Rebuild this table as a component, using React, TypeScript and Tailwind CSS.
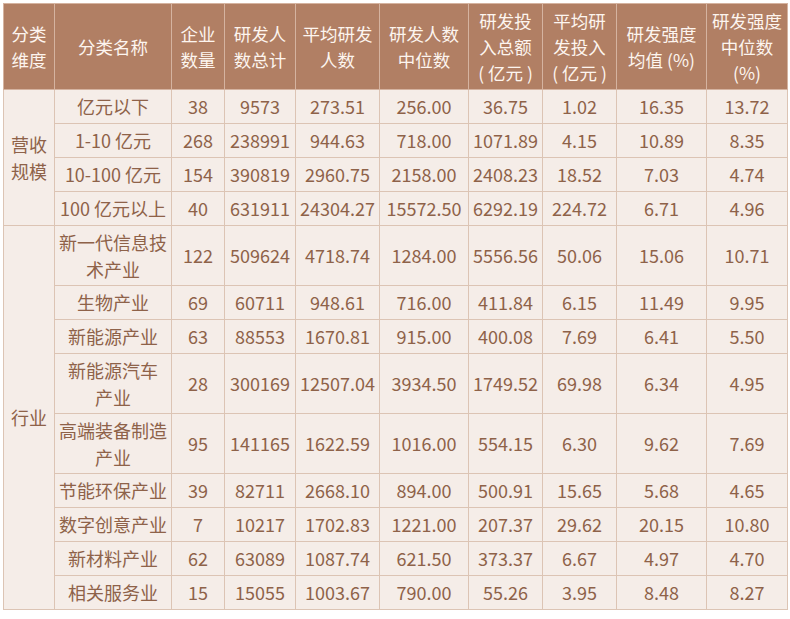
import React from "react";

type Row = {
  name: string[];
  cells: string[];
  tall?: boolean;
};

const scaleRows: Row[] = [
  { name: ["亿元以下"], cells: ["38", "9573", "273.51", "256.00", "36.75", "1.02", "16.35", "13.72"] },
  { name: ["1-10 亿元"], cells: ["268", "238991", "944.63", "718.00", "1071.89", "4.15", "10.89", "8.35"] },
  { name: ["10-100 亿元"], cells: ["154", "390819", "2960.75", "2158.00", "2408.23", "18.52", "7.03", "4.74"] },
  { name: ["100 亿元以上"], cells: ["40", "631911", "24304.27", "15572.50", "6292.19", "224.72", "6.71", "4.96"] },
];

const industryRows: Row[] = [
  { name: ["新一代信息技", "术产业"], tall: true, cells: ["122", "509624", "4718.74", "1284.00", "5556.56", "50.06", "15.06", "10.71"] },
  { name: ["生物产业"], cells: ["69", "60711", "948.61", "716.00", "411.84", "6.15", "11.49", "9.95"] },
  { name: ["新能源产业"], cells: ["63", "88553", "1670.81", "915.00", "400.08", "7.69", "6.41", "5.50"] },
  { name: ["新能源汽车", "产业"], tall: true, cells: ["28", "300169", "12507.04", "3934.50", "1749.52", "69.98", "6.34", "4.95"] },
  { name: ["高端装备制造", "产业"], tall: true, cells: ["95", "141165", "1622.59", "1016.00", "554.15", "6.30", "9.62", "7.69"] },
  { name: ["节能环保产业"], cells: ["39", "82711", "2668.10", "894.00", "500.91", "15.65", "5.68", "4.65"] },
  { name: ["数字创意产业"], cells: ["7", "10217", "1702.83", "1221.00", "207.37", "29.62", "20.15", "10.80"] },
  { name: ["新材料产业"], cells: ["62", "63089", "1087.74", "621.50", "373.37", "6.67", "4.97", "4.70"] },
  { name: ["相关服务业"], cells: ["15", "15055", "1003.67", "790.00", "55.26", "3.95", "8.48", "8.27"] },
];

const headers: string[][] = [
  ["分类", "维度"],
  ["分类名称"],
  ["企业", "数量"],
  ["研发人", "数总计"],
  ["平均研发", "人数"],
  ["研发人数", "中位数"],
  ["研发投", "入总额", "( 亿元 )"],
  ["平均研", "发投入", "( 亿元 )"],
  ["研发强度", "均值 (%)"],
  ["研发强度", "中位数", "(%)"],
];

const widths = ["w-[51px]", "w-[117px]", "w-[53px]", "w-[71px]", "w-[84px]", "w-[89px]", "w-[74px]", "w-[74px]", "w-[90px]", "w-[81px]"];

const td = "border border-[#dcc4b4] text-center align-middle px-0 whitespace-nowrap";

function Lines({ lines }: { lines: string[] }) {
  return (
    <>
      {lines.map((l, i) => (
        <div key={i}>{l}</div>
      ))}
    </>
  );
}

function BodyRow({ row, group }: { row: Row; group?: { label: string[]; span: number } }) {
  const h = row.tall ? "h-[60px]" : "h-[34px]";
  return (
    <tr className={h}>
      {group && (
        <td rowSpan={group.span} className={td}>
          <Lines lines={group.label} />
        </td>
      )}
      <td className={td}>
        <Lines lines={row.name} />
      </td>
      {row.cells.map((c, i) => (
        <td key={i} className={td}>
          {c}
        </td>
      ))}
    </tr>
  );
}

export default function App() {
  return (
    <div
      className="bg-white w-[790px] h-[619px] p-[3px]"
      style={{ fontFamily: '"Noto Sans CJK SC", "Noto Sans", sans-serif' }}
    >
      <table className="table-fixed border-collapse w-[784px] bg-[#f5ede8] text-[#8e6249] text-[18px] leading-[27px]">
        <colgroup>
          {widths.map((w, i) => (
            <col key={i} className={w} />
          ))}
        </colgroup>
        <thead>
          <tr className="h-[86px] bg-[#b17f64] text-[#fdf5ef] text-[17.5px] leading-[26px]">
            {headers.map((h, i) => (
              <th key={i} className="border border-[#d5b3a0] font-normal text-center align-middle px-0 whitespace-nowrap">
                <Lines lines={h} />
              </th>
            ))}
          </tr>
        </thead>
        <tbody>
          {scaleRows.map((r, i) => (
            <BodyRow key={i} row={r} group={i === 0 ? { label: ["营收", "规模"], span: 4 } : undefined} />
          ))}
          {industryRows.map((r, i) => (
            <BodyRow key={i} row={r} group={i === 0 ? { label: ["行业"], span: 9 } : undefined} />
          ))}
        </tbody>
      </table>
    </div>
  );
}
